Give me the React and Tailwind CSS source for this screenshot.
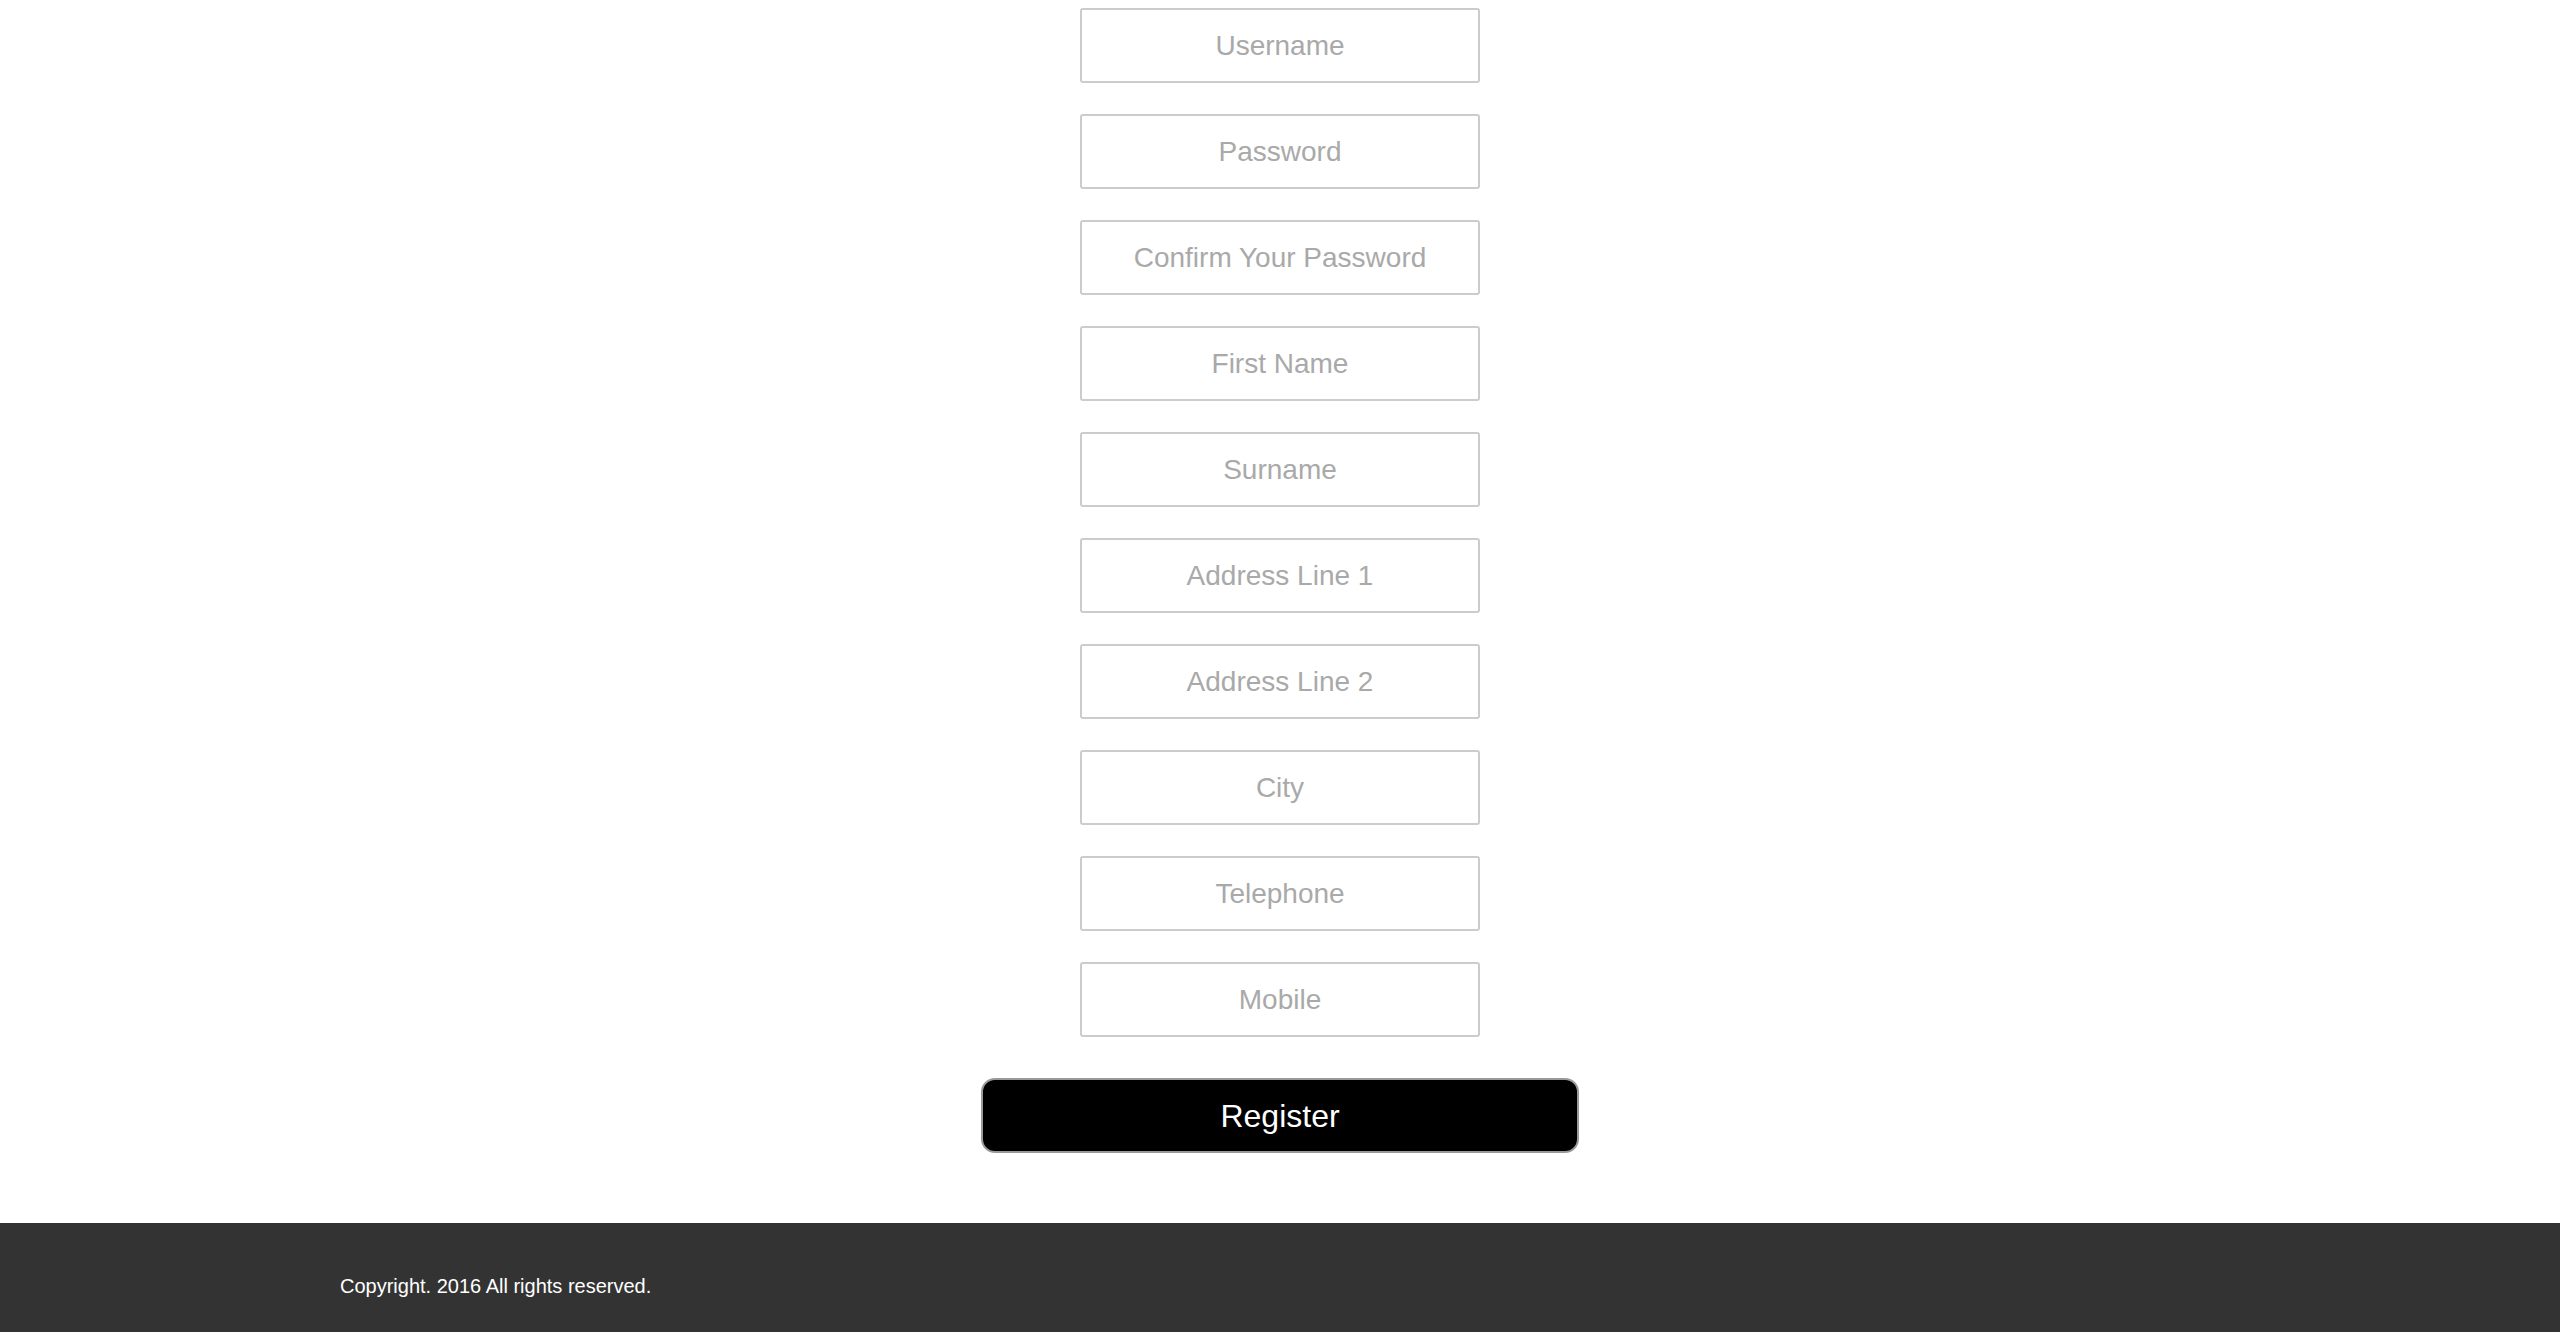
const fields = [
    { name: "username", placeholder: "Username", type: "text" },
    { name: "password", placeholder: "Password", type: "password" },
    { name: "confirmPassword", placeholder: "Confirm Your Password", type: "password" },
    { name: "firstName", placeholder: "First Name", type: "text" },
    { name: "surname", placeholder: "Surname", type: "text" },
    { name: "address1", placeholder: "Address Line 1", type: "text" },
    { name: "address2", placeholder: "Address Line 2", type: "text" },
    { name: "city", placeholder: "City", type: "text" },
    { name: "telephone", placeholder: "Telephone", type: "tel" },
    { name: "mobile", placeholder: "Mobile", type: "tel" },
];

export default function App() {
    return (
        <div className="min-h-[1332px] flex flex-col bg-white font-['Liberation_Sans',Arial,sans-serif]">

            <form className="flex flex-col items-center pt-[8px]">

                <div className="flex flex-col gap-[31px]">
                    {fields.map((field) => (
                        <input
                            key={field.name}
                            name={field.name}
                            type={field.type}
                            placeholder={field.placeholder}
                            className="w-[400px] h-[75px] border-2 border-[#cccccc] rounded-[3px] text-center text-[28px] text-[#555] placeholder:text-[#a9a9a9] outline-none"
                        />
                    ))}
                </div>

                <button
                    type="submit"
                    className="mt-[41px] w-[598px] h-[75px] bg-black text-white text-[32px] border-2 border-[#999999] rounded-[14px]"
                >
                    Register
                </button>

            </form>

            <footer className="mt-[70px] h-[109px] bg-[#333333] pl-[340px] pt-[51px]">
                <p className="text-white text-[20px] leading-[24px]">
                    Copyright. 2016 All rights reserved.
                </p>
            </footer>

        </div>
    );
}
